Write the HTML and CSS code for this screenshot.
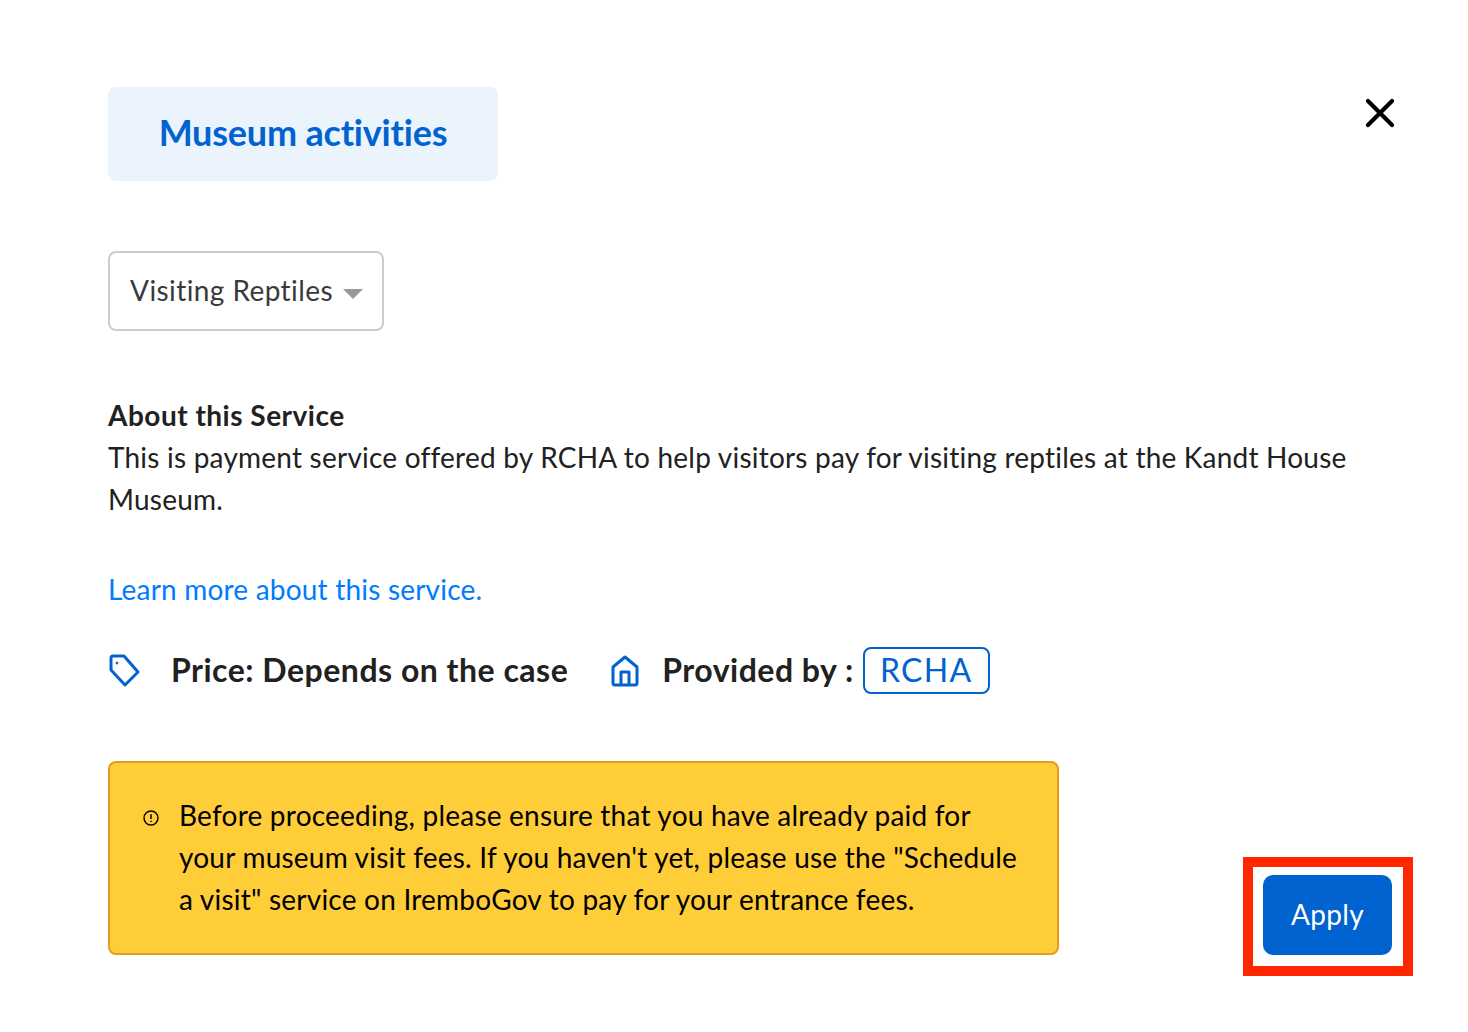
FILE: index.html
```html
<!DOCTYPE html>
<html lang="en">
<head>
<meta charset="utf-8">
<title>Museum activities</title>
<link rel="stylesheet" href="styles.css">
</head>
<body>
<main class="modal">
  <header class="head">
    <h1 class="title">Museum activities</h1>
    <button class="close" aria-label="Close">
      <svg width="30" height="30" viewBox="0 0 30 30"><path d="M3 3L27 27M27 3L3 27" fill="none" stroke="#000" stroke-width="4.2" stroke-linecap="round"/></svg>
    </button>
  </header>
  <div class="select">Visiting Reptiles<span class="caret"></span></div>
  <section class="about">
    <h2 class="about-title">About this Service</h2>
    <p class="about-text">This is payment service offered by RCHA to help visitors pay for visiting reptiles at the Kandt House Museum.</p>
  </section>
  <a class="learn" href="#">Learn more about this service.</a>
  <div class="meta">
    <svg class="tag" width="32" height="33" viewBox="0 0 32 33" fill="none" stroke="#0063cf" stroke-width="3" stroke-linejoin="round"><path d="M3 4A2 2 0 0 1 5 2H16L30 18L17 31L3 16Z"/><circle cx="9" cy="9" r="1" fill="#0063cf" stroke-width="1"/></svg>
    <span class="meta-text price">Price: Depends on the case</span>
    <svg class="home" width="30" height="33" viewBox="0 0 30 33" fill="none" stroke="#0063cf" stroke-width="3" stroke-linejoin="round"><path d="M3 13L15 3L27 13V29A2 2 0 0 1 25 31H5A2 2 0 0 1 3 29Z"/><path d="M11 31V18H19V31"/></svg>
    <span class="meta-text">Provided by :</span>
    <span class="badge">RCHA</span>
  </div>
  <div class="bottom">
    <div class="alert">
      <svg class="alert-icon" width="16" height="16" viewBox="0 0 16 16" fill="none" stroke="#000" stroke-width="1.4"><circle cx="8" cy="8" r="7"/><path d="M8 4.2V9M8 10.8V12" stroke-width="1.5"/></svg>
      <p class="alert-text">Before proceeding, please ensure that you have already paid for your museum visit fees. If you haven't yet, please use the "Schedule a visit" service on IremboGov to pay for your entrance fees.</p>
    </div>
    <div class="apply-wrap">
      <button class="apply">Apply</button>
      <span class="highlight"></span>
    </div>
  </div>
</main>
</body>
</html>
```

FILE: styles.css
```css
* { box-sizing: border-box; }
html, body { margin: 0; background: #fff; }
body {
  font-family: "Lato", "Noto Sans", sans-serif;
  color: #212121;
  height: 1032px;
  overflow: hidden;
}
.modal { padding: 87px 55px 0 108px; }
.head { display: flex; justify-content: space-between; align-items: flex-start; }
.title {
  margin: 0;
  width: 390px;
  height: 94px;
  padding-bottom: 4px;
  display: flex;
  align-items: center;
  justify-content: center;
  background: #ebf3fd;
  border-radius: 8px;
  color: #0063cf;
  font-size: 36px;
  font-weight: 700;
  letter-spacing: -0.2px;
}
.close {
  border: 0;
  background: none;
  padding: 0;
  margin: 11px 18px 0 0;
  width: 30px;
  height: 30px;
}
.close svg { display: block; }
.select {
  margin-top: 70px;
  width: 276px;
  height: 80px;
  border: 2px solid #ccc;
  border-radius: 8px;
  padding: 0 0 2px 20px;
  display: flex;
  align-items: center;
  font-size: 28px;
  letter-spacing: 0.42px;
  color: #3a3a3a;
}
.caret {
  margin-left: 10px;
  margin-top: 7px;
  border-left: 10px solid transparent;
  border-right: 10px solid transparent;
  border-top: 10px solid #999;
}
.about { margin-top: 63px; font-size: 28px; line-height: 42px; letter-spacing: 0.22px; }
.about-title { margin: 0; font-size: 28px; font-weight: 700; letter-spacing: 0.5px; }
.about-text { margin: 0; }
.learn {
  display: block;
  margin-top: 48px;
  font-size: 28px;
  line-height: 42px;
  letter-spacing: 0.2px;
  color: #007bff;
  text-decoration: none;
}
.meta { display: flex; align-items: center; margin-top: 36px; height: 48px; }
.tag { margin-right: 31px; }
.price { margin-right: 42px; }
.home { margin-right: 22px; }
.meta-text { font-size: 32px; font-weight: 700; letter-spacing: 0.5px; padding-bottom: 2px; }
.badge {
  margin-left: 9px;
  height: 47px;
  width: 127px;
  padding-bottom: 1px;
  border: 2px solid #0063cf;
  border-radius: 8px;
  color: #0063cf;
  font-size: 32px;
  letter-spacing: 1.3px;
  display: flex;
  align-items: center;
  justify-content: center;
}
.bottom { display: flex; justify-content: space-between; align-items: flex-end; margin-top: 67px; }
.alert {
  width: 951px;
  height: 194px;
  background: #ffcd38;
  border: 2px solid #e39d1e;
  border-radius: 8px;
  padding: 31px 30px 0 33px;
  display: flex;
  color: #000;
}
.alert-icon { flex: none; margin: 16px 20px 0 0; }
.alert-text { margin: 0; font-size: 28px; line-height: 42px; letter-spacing: 0.22px; }
.apply-wrap { position: relative; margin-right: 21px; }
.apply {
  display: block;
  width: 129px;
  height: 80px;
  padding: 0 0 3px;
  border: 0;
  border-radius: 10px;
  background: #0063cf;
  color: #fff;
  font: 400 28px "Lato", sans-serif;
  letter-spacing: 0.3px;
}
.highlight {
  position: absolute;
  left: -20px;
  top: -18px;
  width: 170px;
  height: 119px;
  border: 10px solid #ff2600;
}
```
